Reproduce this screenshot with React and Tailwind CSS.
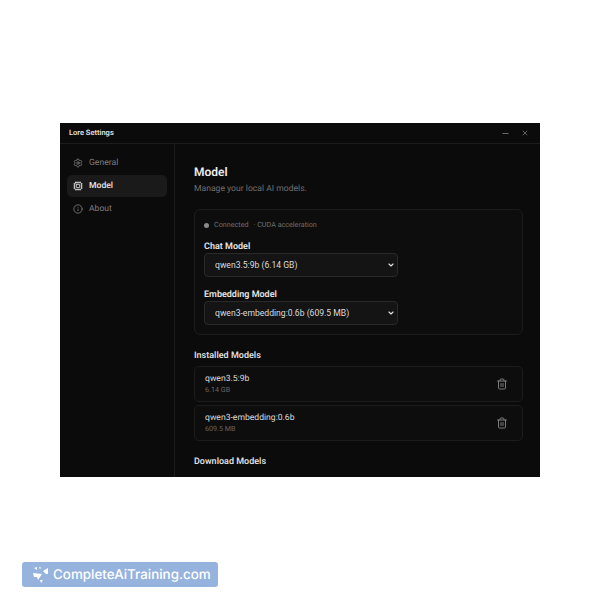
import React from 'react';
import { Settings, Cpu, Info, Minus, X, Trash2, ChevronDown } from 'lucide-react';

const navItems = [
  { label: 'General', icon: Settings },
  { label: 'Model', icon: Cpu, active: true },
  { label: 'About', icon: Info },
];

const installed = [
  { name: 'qwen3.5:9b', size: '6.14 GB' },
  { name: 'qwen3-embedding:0.6b', size: '609.5 MB' },
];

const ModelSelect = ({ label, value }) => (
  <div>
    <div className="text-[9px] leading-[12px] font-semibold text-[#e4e4e4]">{label}</div>
    <div className="relative w-[194px]">
      <select
        defaultValue={value}
        className="appearance-none block w-full h-[24px] pl-[10px] rounded-[4px] border border-[#2a2a2a] bg-[#141414] text-[8.6px] text-[#dcdcdc] outline-none"
      >
        <option>{value}</option>
      </select>
      <ChevronDown size={8} strokeWidth={3.5} className="absolute right-[3px] top-[8px] text-[#e0e0e0]" />
    </div>
  </div>
);

const App = () => {
  return (
    <div className="w-[600px] h-[600px] bg-white overflow-hidden pt-[123px] font-['Roboto',sans-serif] [text-rendering:geometricPrecision]">
      <div className="ml-[60px] w-[480px] h-[354px] bg-[#0b0b0b] flex flex-col overflow-hidden">
        <div className="h-[21px] shrink-0 flex items-center justify-between pl-[9px] pr-[11px] border-b border-[#1c1c1c]">
          <span className="text-[7.5px] font-semibold text-[#e0e0e0]">Lore Settings</span>
          <div className="flex items-center gap-[11px] text-[#8a8a8a]">
            <Minus size={9} />
            <X size={8} />
          </div>
        </div>

        <div className="flex flex-1 min-h-0">
          <div className="w-[115px] shrink-0 border-r border-[#1c1c1c] px-[7px] pt-[8px] flex flex-col gap-[1px]">
            {navItems.map(({ label, icon: Icon, active }) => (
              <div
                key={label}
                className={
                  active
                    ? 'h-[22px] flex items-center gap-[6px] pl-[6px] rounded-[5px] bg-[#1a1a1a] text-[#e6e6e6] text-[8.6px] font-medium'
                    : 'h-[22px] flex items-center gap-[6px] pl-[6px] rounded-[5px] text-[#7d7d7d] text-[8.6px]'
                }
              >
                <Icon size={10} />
                <span>{label}</span>
              </div>
            ))}
          </div>

          <div className="flex-1 min-w-0 overflow-hidden pl-[19px] pr-[17px] pt-[20px]">
            <h1 className="text-[12px] leading-[16px] font-semibold text-[#ececec]">Model</h1>
            <p className="mt-[2px] text-[8.6px] leading-[14px] text-[#6f6f6f]">Manage your local AI models.</p>

            <div className="mt-[13px] h-[126px] rounded-[6px] border border-[#1c1c1c] bg-[#0d0d0d] pl-[9px] pt-[10px]">
              <div className="flex items-center text-[7.2px] leading-[10px] text-[#6f6f6f]">
                <span className="w-[5px] h-[5px] rounded-full bg-[#8a8a8a] mr-[5px]" />
                <span>Connected</span>
                <span className="ml-[5px]">· CUDA acceleration</span>
              </div>
              <div className="mt-[11px] flex flex-col gap-[12px]">
                <ModelSelect label="Chat Model" value="qwen3.5:9b (6.14 GB)" />
                <ModelSelect label="Embedding Model" value="qwen3-embedding:0.6b (609.5 MB)" />
              </div>
            </div>

            <h2 className="mt-[15px] text-[9px] leading-[12px] font-semibold text-[#dedede]">Installed Models</h2>
            <div className="mt-[4px] flex flex-col gap-[3px]">
              {installed.map((m) => (
                <div
                  key={m.name}
                  className="h-[36px] flex items-center justify-between pl-[10px] pr-[14px] rounded-[5px] border border-[#1c1c1c] bg-[#0d0d0d]"
                >
                  <div>
                    <div className="text-[8.6px] leading-[11px] text-[#dcdcdc]">{m.name}</div>
                    <div className="text-[7.2px] leading-[10px] text-[#666666]">{m.size}</div>
                  </div>
                  <Trash2 size={12} className="text-[#7a7a7a]" />
                </div>
              ))}
            </div>

            <h2 className="mt-[15px] text-[9px] leading-[12px] font-semibold text-[#dedede]">Download Models</h2>
          </div>
        </div>
      </div>

      <div className="mt-[85px] ml-[22px] w-[196px] h-[25px] rounded-[3px] bg-[#96b3de] flex items-center pl-[11px] gap-[4px] font-['Inter',sans-serif]">
        <svg width="16" height="16" viewBox="0 0 16 16" fill="#ffffff" className="shrink-0">
          <path d="M1 1l3-1 0 3zM6 0l2 .5-1 2zM10 4l5-3 0 6-2 0zM0 6l9 1-4 6-1-3-3 0zM7 13l3 0-2 3z" />
        </svg>
        <span className="text-[13.4px] leading-[26px] font-medium text-white">CompleteAiTraining.com</span>
      </div>
    </div>
  );
};

export default App;
